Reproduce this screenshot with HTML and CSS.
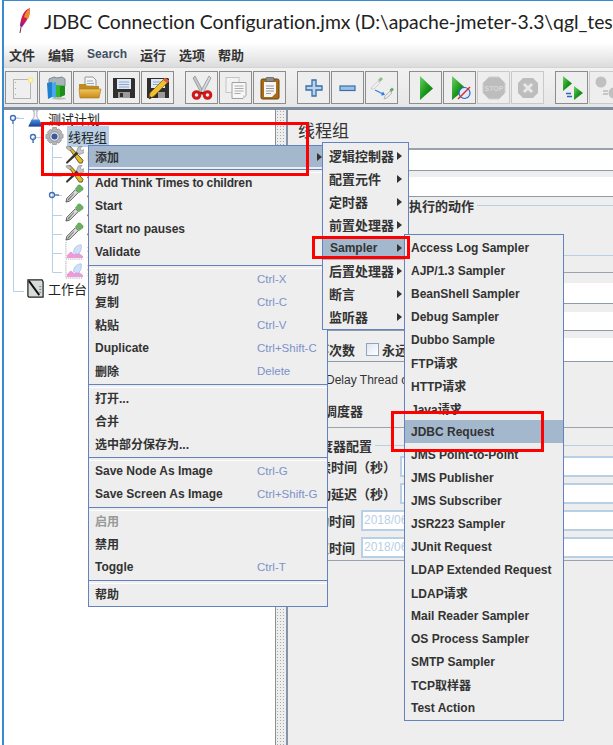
FILE: index.html
```html
<!DOCTYPE html>
<html lang="zh">
<head>
<meta charset="utf-8">
<title>JDBC Connection Configuration.jmx</title>
<link rel="stylesheet" href="styles.css">
</head>
<body>
<svg class="defs" width="0" height="0" aria-hidden="true">
  <defs>
    <linearGradient id="g-play" x1="0" y1="0" x2="1" y2="1"><stop offset="0" stop-color="#6fd06a"/><stop offset=".5" stop-color="#1c9a1c"/><stop offset="1" stop-color="#0a6a0a"/></linearGradient>
    <linearGradient id="g-folder" x1="0" y1="0" x2="0" y2="1"><stop offset="0" stop-color="#f2c55c"/><stop offset="1" stop-color="#c78a1a"/></linearGradient>
    <linearGradient id="g-flask" x1="0" y1="0" x2="0" y2="1"><stop offset="0" stop-color="#4f8fe0"/><stop offset="1" stop-color="#123f9a"/></linearGradient>
    <symbol id="i-new" viewBox="0 0 24 24"><rect x="3.500" y="3.500" width="17" height="19" fill="#efefef" stroke="#b4b4b4"/><path d="M5.500 6v1M5.500 12v1M5.500 18v1" stroke="#aaa"/><circle cx="20.500" cy="4" r="2.400" fill="#fff6a8" stroke="#f0e48a"/></symbol>
    <symbol id="i-templates" viewBox="0 0 24 24"><path d="M5 3l5-2 3 1 5-1 3 2v7H5z" fill="#a9b4ba" stroke="#7d8a90"/><path d="M3 7l5-1v15l-4 2z" fill="#1f7fd0"/><path d="M8 7l4-1v16l-4-1z" fill="#47a9e8"/><path d="M12 9l9 1v9l-7 3-2-1z" fill="#35b52c"/><path d="M16 10h5v9l-5 2z" fill="#1f8d1a"/><ellipse cx="15" cy="22.500" rx="7" ry="1.200" fill="#bbb"/></symbol>
    <symbol id="i-open" viewBox="0 0 24 24"><path d="M7 1h8l3 3v10H7z" fill="#f4f4f4" stroke="#999"/><path d="M9 5h6M9 7.500h7M9 10h7" stroke="#9ab"/><path d="M1 8h7l1 2h12v4H1z" fill="#c08a22"/><path d="M1 13h22l-2 9H2z" fill="url(#g-folder)" stroke="#a8761a" stroke-width=".6"/></symbol>
    <symbol id="i-save" viewBox="0 0 24 24"><path d="M1 2h21l1 1v19H1z" fill="#2f2f2f"/><rect x="5" y="3" width="14" height="10" fill="#dfe9f5"/><path d="M7 6h10M7 8.500h10M7 11h10" stroke="#8fa8c8"/><rect x="6" y="16" width="12" height="6" fill="#9a9a9a"/><rect x="8" y="17" width="3" height="4" fill="#2f2f2f"/></symbol>
    <symbol id="i-saveas" viewBox="0 0 24 24"><path d="M1 2h21l1 1v19H1z" fill="#2f2f2f"/><rect x="5" y="3" width="14" height="9" fill="#dfe9f5"/><path d="M7 6h10M7 8.500h10" stroke="#8fa8c8"/><rect x="12" y="16" width="7" height="6" fill="#9a9a9a"/><path d="M19 2l4 3L8 20l-5 3 1-6z" fill="#f0c030" stroke="#8a6a10" stroke-width=".8"/><path d="M19 2l4 3-2 2-4-3z" fill="#e05a4a"/><path d="M3 23l1-3 2 2z" fill="#222"/></symbol>
    <symbol id="i-cut" viewBox="0 0 24 24"><path d="M5 0l8 15-2 2L3 2z" fill="#c4c8cc" stroke="#80868c" stroke-width=".7"/><path d="M19 0l-8 15 2 2 8-15z" fill="#d6dade" stroke="#80868c" stroke-width=".7"/><circle cx="6.500" cy="19" r="3.300" fill="none" stroke="#d01818" stroke-width="3"/><circle cx="17.500" cy="19" r="3.300" fill="none" stroke="#d01818" stroke-width="3"/><path d="M9 16h6l-3 3z" fill="#b01010"/></symbol>
    <symbol id="i-copy" viewBox="0 0 24 24"><rect x="2" y="1.500" width="13" height="15" fill="#f2f2f2" stroke="#c4c4c4"/><path d="M8 6.500h14v13l-3 3H8z" fill="#f7f7f7" stroke="#a0a0a0"/><path d="M10.500 10h9M10.500 12.500h9M10.500 15h9M10.500 17.500h6" stroke="#aaa"/><path d="M19 22.500v-3h3z" fill="#ccc"/></symbol>
    <symbol id="i-paste" viewBox="0 0 24 24"><rect x="3" y="3" width="18" height="20" rx="1.500" fill="#a86a14" stroke="#6c4208"/><path d="M6 6h12v11l-4 4H6z" fill="#f6f6f6"/><path d="M8 10h8M8 12.500h8M8 15h8M8 17.500h5" stroke="#999"/><rect x="8" y="1.500" width="8" height="4" rx="1" fill="#8c8c8c" stroke="#555" stroke-width=".7"/></symbol>
    <symbol id="i-plus" viewBox="0 0 24 24"><path d="M10 4h4v6h6v4h-6v6h-4v-6H4v-4h6z" fill="#b8d4f0" stroke="#3a6ea8" stroke-width="1.300"/></symbol>
    <symbol id="i-minus" viewBox="0 0 24 24"><rect x="4" y="10" width="15" height="4.500" fill="#9cc0e8" stroke="#3a6ea8" stroke-width="1.200"/></symbol>
    <symbol id="i-toggle" viewBox="0 0 24 24"><path d="M1 13l1-2 6-6 2 2-6 6z" fill="#eee" stroke="#c4c4c4" stroke-width=".7"/><path d="M8 4l3-3 2 2-3 3z" fill="#8ec08e"/><path d="M5 14l8 4" stroke="#2a7de0" stroke-width="1.200"/><path d="M15 19l-4 .5 2-4z" fill="#2a7de0"/><path d="M14 23l1-3 5-5 2 2-5 5z" fill="#e8e8e8" stroke="#999" stroke-width=".6"/><path d="M19.500 14l2.500-2.500 2 2-2.500 2.500z" fill="#6aa76a"/></symbol>
    <symbol id="i-play" viewBox="0 0 24 24"><path d="M6 0l13 12.500L6 24z" fill="url(#g-play)"/></symbol>
    <symbol id="i-playno" viewBox="0 0 24 24"><path d="M4 0l14 12.500L4 24z" fill="url(#g-play)"/><circle cx="16.500" cy="17" r="5.500" fill="#dfe9f7" stroke="#2a66c8" stroke-width="1.200"/><path d="M10 23l12-12" stroke="#e02828" stroke-width="1.400"/></symbol>
    <symbol id="i-stop" viewBox="0 0 24 24"><path d="M7 1h10l6 6v10l-6 6H7l-6-6V7z" fill="#bdbdbd" stroke="#d0d0d0"/><text x="12" y="15" class="stop-text">STOP</text></symbol>
    <symbol id="i-shut" viewBox="0 0 24 24"><path d="M7 2h10l5 5v10l-5 5H7l-5-5V7z" fill="#bdbdbd"/><path d="M8 8l8 8M16 8l-8 8" stroke="#e8e8e8" stroke-width="3"/></symbol>
    <symbol id="i-rstart" viewBox="0 0 24 24"><path d="M3 0l9 7.500L3 15z" fill="url(#g-play)"/><path d="M14 10l9 7-9 7z" fill="url(#g-play)"/><path d="M6 17.500h5M12 20.500H7" stroke="#2a66c8" stroke-width="1.400"/></symbol>
    <symbol id="i-rstop" viewBox="0 0 24 24"><circle cx="7" cy="6" r="5.500" fill="#c0c0c0"/><circle cx="20" cy="17" r="5.500" fill="#c0c0c0"/><path d="M9 15h5M14 18H9" stroke="#bbb" stroke-width="1.400"/></symbol>
    <symbol id="i-flask" viewBox="0 0 20 20"><path d="M7.500 1h5v1h-1v6l5.500 10H3L8.500 8V2h-1z" fill="#f2f2f2" stroke="#99a" stroke-width=".8"/><path d="M6 11h8l3.500 7.500h-15z" fill="url(#g-flask)"/></symbol>
    <symbol id="i-gear" viewBox="0 0 20 20"><path d="M8 .5h4l.5 2.500 2-1 3 3-1 2 2.500.5v4l-2.500.5 1 2-3 3-2-1-.5 2.500H8l-.5-2.500-2 1-3-3 1-2L1 12V8l2.500-.5-1-2 3-3 2 1z" fill="#b4b6ba" stroke="#85888c" stroke-width=".7"/><circle cx="10" cy="10" r="5" fill="#e6e8ee" stroke="#8a8e96"/><circle cx="10" cy="10" r="3.200" fill="#3a5a9a"/></symbol>
    <symbol id="i-tool" viewBox="0 0 20 20"><path d="M3 1l2-1 14 15-1 3-3 0z" fill="#e8b820" stroke="#333" stroke-width=".8"/><path d="M2 19l-1-2L13 5l2 2z" fill="#333"/><path d="M12 6l2-5 4-1-2 3 2 2 3-2-1 4-5 2z" fill="#c4c8cc" stroke="#777" stroke-width=".6"/><path d="M1 1l3-1 3 3-2 2-3-2z" fill="#bbb" stroke="#777" stroke-width=".5"/></symbol>
    <symbol id="i-drop" viewBox="0 0 20 20"><path d="M1 19l1-4L11 6l3 3-9 9z" fill="#dcdcdc" stroke="#444" stroke-width=".9"/><path d="M2 18l2-3 6-6-1 2-5 6z" fill="#777"/><path d="M11 5l3-4 2 0 3 3 0 2-4 3z" fill="#6bb060" stroke="#4a8a44" stroke-width=".5"/></symbol>
    <symbol id="i-chart" viewBox="0 0 20 20"><path d="M1 1v18h18" fill="none" stroke="#999" stroke-dasharray="1 1"/><path d="M2 18v-3l4-4 4 3 4-2 5 4v2z" fill="#ec9ad8"/><path d="M9 12c0-5 4-8 8-8 1 4-1 9-4 10z" fill="#cfe0f8" stroke="#8fb0e0" stroke-width=".6"/></symbol>
    <symbol id="i-bench" viewBox="0 0 20 20"><path d="M2 1h15l1 2v16H3l-1-1z" fill="#d8dcd8" stroke="#222" stroke-width="1.300"/><path d="M3 2l11 15" stroke="#111" stroke-width="2"/><path d="M14 8h2M14 11h2M14 14h2" stroke="#777"/></symbol>
  </defs>
</svg>

<div class="window">
  <header class="titlebar">
    <svg class="feather" width="14" height="26" viewBox="0 0 14 26"><path d="M12 0C6 2 3 8 2 18l2 1C8 14 12 8 12 0z" fill="#d01858"/><path d="M12 0C9 2 7 5 6 9l4 2c2-3 2-7 2-11z" fill="#f08a28"/><path d="M3 14l3 1-2 4-2-1z" fill="#7a2a98"/><path d="M3 19l-1 6" stroke="#7a2a58"/></svg>
    <span class="title-text">JDBC Connection Configuration.jmx (D:\apache-jmeter-3.3\qgl_test</span>
  </header>
  <nav class="menubar">
    <span>文件</span><span>编辑</span><span class="menu-latin">Search</span><span>运行</span><span>选项</span><span>帮助</span>
  </nav>
  <div class="toolbar">
    <div class="tool-group">
      <button class="tool"><svg><use href="#i-new"/></svg></button>
      <button class="tool"><svg><use href="#i-templates"/></svg></button>
      <button class="tool"><svg><use href="#i-open"/></svg></button>
      <button class="tool"><svg><use href="#i-save"/></svg></button>
      <button class="tool"><svg><use href="#i-saveas"/></svg></button>
    </div>
    <div class="tool-group">
      <button class="tool"><svg><use href="#i-cut"/></svg></button>
      <button class="tool"><svg><use href="#i-copy"/></svg></button>
      <button class="tool"><svg><use href="#i-paste"/></svg></button>
    </div>
    <div class="tool-group">
      <button class="tool"><svg><use href="#i-plus"/></svg></button>
      <button class="tool"><svg><use href="#i-minus"/></svg></button>
      <button class="tool"><svg><use href="#i-toggle"/></svg></button>
    </div>
    <div class="tool-group">
      <button class="tool"><svg><use href="#i-play"/></svg></button>
      <button class="tool"><svg><use href="#i-playno"/></svg></button>
      <button class="tool tool--off"><svg><use href="#i-stop"/></svg></button>
      <button class="tool tool--off"><svg><use href="#i-shut"/></svg></button>
    </div>
    <div class="tool-group">
      <button class="tool"><svg><use href="#i-rstart"/></svg></button>
      <button class="tool tool--off"><svg><use href="#i-rstop"/></svg></button>
    </div>
  </div>
  <div class="strip"></div>

  <main class="split">
    <section class="tree">
      <svg class="tree-lines" width="272" height="200" viewBox="4 110 272 200">
        <g fill="none" stroke="#b8d0e6">
          <path d="M13.500 124V291.500H24M13.500 118.500H24"/>
          <path d="M33.500 143V137.500H43M52.500 146V272.500H62M52.500 157.500H62M52.500 176.500H62M57 195.500H62M52.500 215.500H62M52.500 234.500H62M52.500 253.500H62"/>
        </g>
        <g fill="none" stroke="#3f6db5" stroke-width="1.300">
          <circle cx="13" cy="118" r="2.500"/><path d="M13 121v3"/><path d="M16 118h3" stroke="#b8d0e6"/>
          <circle cx="33" cy="137" r="2.500"/><path d="M33 140v3"/>
          <circle cx="52" cy="195" r="2.500"/><path d="M55 195h4"/>
        </g>
      </svg>
      <div class="node node--first node--d0"><svg class="node-icon"><use href="#i-flask"/></svg><span>测试计划</span></div>
      <div class="node node--d1"><svg class="node-icon"><use href="#i-gear"/></svg><span class="node-sel">线程组</span></div>
      <div class="node node--d2"><svg class="node-icon"><use href="#i-tool"/></svg><span>HTTP请求默认值</span></div>
      <div class="node node--d2"><svg class="node-icon"><use href="#i-tool"/></svg><span>JDBC Connection</span></div>
      <div class="node node--d2"><svg class="node-icon"><use href="#i-drop"/></svg><span>JDBC Request</span></div>
      <div class="node node--d2"><svg class="node-icon"><use href="#i-drop"/></svg><span>JDBC Request</span></div>
      <div class="node node--d2"><svg class="node-icon"><use href="#i-drop"/></svg><span>JDBC Request</span></div>
      <div class="node node--d2"><svg class="node-icon"><use href="#i-chart"/></svg><span>查看结果树</span></div>
      <div class="node node--d2"><svg class="node-icon"><use href="#i-chart"/></svg><span>聚合报告</span></div>
      <div class="node node--d0"><svg class="node-icon"><use href="#i-bench"/></svg><span>工作台</span></div>
    </section>
    <div class="divider"></div>
    <section class="panel">
      <h1 class="panel-title">线程组</h1>
      <div class="white-row white-row--name"></div>
      <div class="white-row white-row--note"></div>
      <div class="legend legend--action"><span class="legend-text">在取样器错误后要执行的动作</span><i class="legend-line"></i></div>
      <div class="legend legend--props"><i class="legend-line"></i></div>
      <div class="rule rule--props"></div>
      <div class="white-row white-row--threads"></div>
      <div class="white-row white-row--ramp"></div>
      <div class="loop-row">
        <span class="loop-label">循环次数</span><span class="check"></span><span class="loop-forever">永远</span><span class="loop-field"></span>
      </div>
      <div class="plain-row plain-row--delay">Delay Thread creation until needed</div>
      <div class="plain-row plain-row--sched">调度器</div>
      <div class="legend legend--sched"><span class="legend-text">调度器配置</span><i class="legend-line"></i></div>
      <div class="sched sched--wide"><span class="sched-label">持续时间（秒）</span><span class="input"></span></div>
      <div class="sched sched--wide"><span class="sched-label">启动延迟（秒）</span><span class="input"></span></div>
      <div class="sched sched--short"><span class="sched-label">启动时间</span><span class="input">2018/06/12 14:00:00</span></div>
      <div class="sched sched--short"><span class="sched-label">结束时间</span><span class="input">2018/06/12 14:00:00</span></div>
    </section>
  </main>
</div>

<div class="menu menu--main">
  <div class="item item--short item--on"><span>添加</span><i class="arrow arrow--main"></i></div>
  <div class="sep sep--tall"></div>
  <div class="item item--tight">Add Think Times to children</div>
  <div class="item">Start</div>
  <div class="item">Start no pauses</div>
  <div class="item">Validate</div>
  <div class="sep"></div>
  <div class="item"><span class="item-label">剪切</span><span class="key">Ctrl-X</span></div>
  <div class="item"><span class="item-label">复制</span><span class="key">Ctrl-C</span></div>
  <div class="item"><span class="item-label">粘贴</span><span class="key">Ctrl-V</span></div>
  <div class="item"><span class="item-label">Duplicate</span><span class="key">Ctrl+Shift-C</span></div>
  <div class="item"><span class="item-label">删除</span><span class="key">Delete</span></div>
  <div class="sep"></div>
  <div class="item">打开...</div>
  <div class="item">合并</div>
  <div class="item">选中部分保存为...</div>
  <div class="sep"></div>
  <div class="item"><span class="item-label">Save Node As Image</span><span class="key">Ctrl-G</span></div>
  <div class="item"><span class="item-label">Save Screen As Image</span><span class="key">Ctrl+Shift-G</span></div>
  <div class="sep"></div>
  <div class="item item--off">启用</div>
  <div class="item">禁用</div>
  <div class="item"><span class="item-label">Toggle</span><span class="key">Ctrl-T</span></div>
  <div class="sep"></div>
  <div class="item">帮助</div>
</div>

<div class="menu menu--sub1">
  <div class="item item--sub"><span>逻辑控制器</span><i class="arrow"></i></div>
  <div class="item item--sub"><span>配置元件</span><i class="arrow"></i></div>
  <div class="item item--sub"><span>定时器</span><i class="arrow"></i></div>
  <div class="item item--sub"><span>前置处理器</span><i class="arrow"></i></div>
  <div class="item item--sub item--on item--latin"><span>Sampler</span><i class="arrow"></i></div>
  <div class="item item--sub"><span>后置处理器</span><i class="arrow"></i></div>
  <div class="item item--sub"><span>断言</span><i class="arrow"></i></div>
  <div class="item item--sub"><span>监听器</span><i class="arrow"></i></div>
</div>

<div class="menu menu--sub2">
  <div class="item">Access Log Sampler</div>
  <div class="item">AJP/1.3 Sampler</div>
  <div class="item">BeanShell Sampler</div>
  <div class="item">Debug Sampler</div>
  <div class="item">Dubbo Sample</div>
  <div class="item">FTP请求</div>
  <div class="item">HTTP请求</div>
  <div class="item">Java请求</div>
  <div class="item item--on">JDBC Request</div>
  <div class="item">JMS Point-to-Point</div>
  <div class="item">JMS Publisher</div>
  <div class="item">JMS Subscriber</div>
  <div class="item">JSR223 Sampler</div>
  <div class="item">JUnit Request</div>
  <div class="item">LDAP Extended Request</div>
  <div class="item">LDAP请求</div>
  <div class="item">Mail Reader Sampler</div>
  <div class="item">OS Process Sampler</div>
  <div class="item">SMTP Sampler</div>
  <div class="item">TCP取样器</div>
  <div class="item">Test Action</div>
</div>

<div class="mark mark--add"></div>
<div class="mark mark--sampler"></div>
<div class="mark mark--jdbc"></div>
</body>
</html>
```

FILE: styles.css
```css
* { box-sizing: border-box; }
html, body { margin: 0; padding: 0; }
body {
  position: relative;
  width: 613px;
  height: 745px;
  overflow: hidden;
  background: #fff;
  color: #333;
  font-family: "Liberation Sans", "Noto Sans CJK SC", sans-serif;
  font-size: 12px;
}
.defs { position: absolute; }
.stop-text { font: bold 7px "Liberation Sans", sans-serif; fill: #d8d8d8; text-anchor: middle; }

.window {
  height: 745px;
  margin-left: 2px;
  border-left: 2px solid #3a8ad2;
  border-top: 1px solid #3a8ad2;
  display: flex;
  flex-direction: column;
}
.titlebar {
  height: 42px;
  flex: none;
  display: flex;
  align-items: center;
  gap: 12px;
  padding: 0 0 2px 14px;
  background: #fff;
  white-space: nowrap;
  overflow: hidden;
}
.feather { flex: none; }
.title-text {
  font-family: Lato, "Open Sans", sans-serif;
  font-size: 19.4px;
  letter-spacing: -.05px;
  color: #222;
}
.menubar {
  height: 25px;
  flex: none;
  display: flex;
  align-items: center;
  gap: 13px;
  padding: 0 0 2px 5px;
  font-size: 13px;
  font-weight: bold;
  background: linear-gradient(#fff, #dcdcdc);
  border-bottom: 1px solid #d4d4d4;
}
.menu-latin { font-size: 12px; color: #3f4f63; }

.toolbar {
  height: 39px;
  flex: none;
  display: flex;
  gap: 11px;
  padding: 3px 0 0 1px;
  background: linear-gradient(#f2f2f2, #e6e6e6);
  overflow: hidden;
}
.tool-group { display: flex; gap: 1px; flex: none; }
.tool {
  width: 33px;
  height: 33px;
  padding: 0;
  display: flex;
  align-items: center;
  justify-content: center;
  background: #eee;
  border: 1px solid #8d8d8d;
  outline: 0;
}
.tool svg { width: 24px; height: 24px; }
.tool--off { border-color: #c9c9c9; }
.strip { height: 3px; flex: none; background: #7f8e9f; }

.split { flex: 1; display: flex; min-height: 0; }
.tree {
  position: relative;
  width: 271px;
  flex: none;
  background: #fff;
  font-size: 13px;
  color: #222;
}
.tree-lines { position: absolute; left: 0; top: 0; }
.node { position: relative; height: 19px; display: flex; align-items: center; gap: 3px; white-space: nowrap; }
.node--first { height: 17px; }
.node-icon { width: 19px; height: 19px; flex: none; }
.node--d0 { padding-left: 22px; }
.node--d1 { padding-left: 41px; }
.node--d2 { padding-left: 61px; }
.node-sel { background: #b8cfe5; padding: 1px 2px 1px 1px; }
.divider {
  width: 13px;
  flex: none;
  border-left: 1px solid #8d8d8d;
  border-right: 2px solid #8494a6;
  background-color: #eee;
  background-image: radial-gradient(#a9a9a9 .7px, transparent .8px);
  background-size: 3px 3px;
}

.panel { flex: 1; min-width: 0; background: #eee; display: flex; flex-direction: column; font-size: 13px; font-weight: bold; white-space: nowrap; overflow: hidden; }
.panel-title { margin: 0; height: 38px; padding: 10px 0 0 10px; font-size: 17px; line-height: 24px; font-weight: normal; color: #333; flex: none; }
.white-row { flex: none; background: #fff; border-bottom: 1px solid #8f9aa8; }
.white-row--name { height: 23px; border-top: 2px solid #9aa3ad; }
.white-row--note { height: 20px; margin-top: 6px; }
.legend { flex: none; display: flex; align-items: center; gap: 3px; }
.legend-line { flex: 1; height: 1px; background: #b8d0e6; }
.legend-text { flex: none; }
.legend--action { height: 18px; padding: 0 0 2px 17px; }
.legend--props { height: 16px; margin-top: 32px; }
.rule { flex: none; }
.rule--props { height: 10px; border-bottom: 1px solid #9aa3ad; }
.white-row--threads { height: 21px; margin-top: 10px; }
.white-row--ramp { height: 19px; margin-top: 8px; }
.loop-row { flex: none; height: 24px; margin-top: 7px; display: flex; align-items: center; border-bottom: 1px solid #8f9aa8; }
.loop-label { width: 67px; flex: none; text-align: right; }
.check { width: 13px; height: 13px; margin-left: 11px; flex: none; border: 1px solid #8fa4bd; background: linear-gradient(135deg, #dfe7f1, #fff); }
.loop-forever { margin-left: 3px; flex: none; }
.loop-field { flex: 1; height: 23px; margin-left: 6px; background: #fff; }
.plain-row { flex: none; padding-left: 38px; }
.plain-row--delay { height: 23px; margin-top: 7px; line-height: 23px; font-size: 12px; font-weight: normal; }
.plain-row--sched { height: 22px; margin-top: 9px; line-height: 22px; padding-left: 36px; }
.legend--sched { height: 29px; margin-top: 4px; padding: 6px 0 0 19px; border-top: 1px solid #9aa3ad; }
.sched { flex: none; display: flex; align-items: center; }
.sched-label { flex: none; text-align: right; }
.input {
  flex: 1;
  display: block;
  height: 100%;
  background: #fff;
  border: 2px solid #b8d0e6;
  border-right: 0;
  font-size: 12px;
  font-weight: normal;
  color: #b8d0e6;
  padding-left: 1px;
  line-height: 17px;
  overflow: hidden;
}
.sched--wide { height: 21px; margin-bottom: 6px; }
.sched--wide .sched-label { width: 108px; margin-right: 4px; }
.sched--short { height: 21px; margin-bottom: 6px; }
.sched--short .sched-label { width: 67px; margin-right: 6px; }
.sched--short:last-child { margin-bottom: 0; height: 24px; border-bottom: 1px solid #9aa3ad; padding-bottom: 2px; }

.menu {
  position: absolute;
  background: #eee;
  border: 1px solid #6382bf;
  font-weight: bold;
  font-size: 12px;
  color: #333;
  white-space: nowrap;
}
.menu--main { left: 88px; top: 145px; width: 240px; z-index: 1; }
.menu--sub1 { left: 322px; top: 142px; width: 87px; padding-top: 2px; z-index: 2; font-size: 13px; }
.menu--sub2 { left: 404px; top: 234px; width: 160px; padding: 1px 0; z-index: 3; }
.item { height: 23px; display: flex; align-items: center; padding-left: 6px; }
.menu--main .item, .menu--sub1 .item { padding-bottom: 2px; }
.item--short { height: 21px; }
.menu--main .item--short { padding-bottom: 0; }
.item--tight { letter-spacing: -.15px; }
.item--latin { font-size: 12px; padding-left: 7px; }
.item--on { background: #a3b8cc; }
.item--off { color: #999; }
.item--sub { justify-content: space-between; padding-right: 6px; }
.item-label { width: 162px; flex: none; }
.key { font-weight: normal; font-size: 11.5px; color: #7d92c9; }
.arrow { width: 0; height: 0; border-left: 5px solid #333; border-top: 4px solid transparent; border-bottom: 4px solid transparent; flex: none; }
.arrow--main { position: absolute; left: 228px; top: 7px; }
.item--on:first-child { width: 233px; }
.sep { height: 4px; border-top: 1px solid #6382bf; border-bottom: 1px solid #fff; margin-top: 1px; margin-bottom: -1px; }
.sep--tall { height: 4px; margin-top: 2px; margin-bottom: -1px; }
.mark { position: absolute; border: 3px solid #f00; z-index: 4; pointer-events: none; }
.mark--add { left: 41px; top: 122px; width: 268px; height: 54px; }
.mark--sampler { left: 312px; top: 236px; width: 98px; height: 23px; }
.mark--jdbc { left: 391px; top: 411px; width: 153px; height: 41px; }
```
